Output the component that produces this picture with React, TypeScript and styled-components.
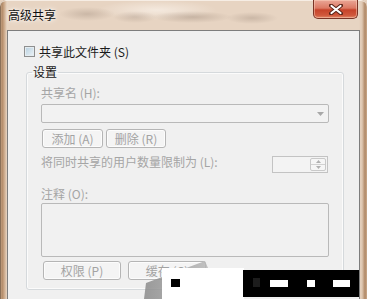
import React from "react";
import styled, { createGlobalStyle } from "styled-components";

const Global = createGlobalStyle`
  html, body { margin: 0; padding: 0; background: #e6d2bf; }
  body { font-family: "Noto Sans CJK SC", "Noto Sans", sans-serif; }
  * { box-sizing: border-box; }
`;

const Window = styled.div`
  position: relative;
  width: 367px;
  height: 299px;
  overflow: hidden;
  display: flex;
  flex-direction: column;
  padding: 0 7px;
  border-radius: 6px 6px 0 0;
  background:
    linear-gradient(90deg, #d9bfa5 0px, #b08866 2px, #c9a585 4px, #e8d6c5 7px, transparent 8px),
    linear-gradient(270deg, #c9a98b 0px, #b08866 2px, #dfc8b2 5px, transparent 8px),
    #e7d4c2;
  box-shadow: inset 0 1px 0 #f6ede4, inset 1px 0 0 #8b7058;
`;

const TitleBar = styled.div`
  height: 30px;
  flex: none;
  display: flex;
  align-items: flex-start;
  background:
    radial-gradient(ellipse 28px 7px at 80px 14px, rgba(150,130,115,0.35), transparent),
    radial-gradient(ellipse 22px 6px at 128px 17px, rgba(160,140,125,0.35), transparent),
    radial-gradient(ellipse 40px 6px at 185px 17px, rgba(150,130,115,0.4), transparent),
    radial-gradient(ellipse 26px 6px at 245px 18px, rgba(150,130,115,0.35), transparent),
    radial-gradient(ellipse 60px 10px at 150px 10px, rgba(255,250,245,0.55), transparent);
`;

const Title = styled.span`
  margin: 8px 0 0 1px;
  font-size: 12px;
  line-height: 14px;
  color: #111;
  text-shadow: 0 0 6px #fff, 0 0 3px #fff;
`;

const CloseButton = styled.div`
  margin-left: auto;
  margin-right: 2px;
  width: 45px;
  height: 19px;
  border: 1px solid #7a3426;
  border-top: none;
  border-radius: 0 0 5px 5px;
  background: linear-gradient(180deg, #eaa696 0%, #dc7a64 45%, #c6432a 55%, #d0583c 85%, #e08868 100%);
  box-shadow: inset 0 0 0 1px rgba(255,220,200,0.45);
  display: flex;
  align-items: center;
  justify-content: center;
`;

const Client = styled.div`
  flex: 1;
  background: #f0f0f0;
  border: 1px solid #7d7d7d;
  border-bottom: none;
  display: flex;
  flex-direction: column;
  padding-left: 16px;
`;

const CheckRow = styled.label`
  margin-top: 14px;
  height: 13px;
  display: flex;
  align-items: center;
  gap: 4px;
  font-size: 12px;
  color: #1a1a1a;
`;

const CheckBox = styled.span`
  width: 11px;
  height: 11px;
  border: 1px solid #8e8f8f;
  background: linear-gradient(135deg, #b6cfdf 0%, #d4e3ec 55%, #eef4f8 100%);
  box-shadow: inset 0 0 0 1px #e4ecf1;
`;

const Group = styled.fieldset`
  margin: 7px 0 0 2px;
  width: 318px;
  padding: 0 14px 9px 14px;
  border: 1px solid #d5d9dc;
  border-radius: 3px;
  box-shadow: inset 0 0 0 1px #fbfbfb;
  display: flex;
  flex-direction: column;
`;

const Legend = styled.legend`
  margin-left: -9px;
  padding: 0 1px;
  font-size: 12px;
  line-height: 14px;
  color: #1a1a1a;
`;

const Dim = styled.div<{ $top: number }>`
  margin-top: ${(p) => p.$top}px;
  font-size: 12px;
  line-height: 14px;
  color: #a5a5a5;
  white-space: nowrap;
`;

const Combo = styled.div`
  margin-top: 4px;
  width: 288px;
  height: 19px;
  border: 1px solid #b9b9b9;
  border-radius: 2px;
  background: #f2f2f2;
  display: flex;
  align-items: center;
  justify-content: flex-end;
  padding-right: 4px;
`;

const ButtonRow = styled.div<{ $top: number; $gap: number; $left: number }>`
  margin-top: ${(p) => p.$top}px;
  margin-left: ${(p) => p.$left}px;
  display: flex;
  gap: ${(p) => p.$gap}px;
`;

const Button = styled.div<{ $w: number }>`
  width: ${(p) => p.$w}px;
  height: 19px;
  border: 1px solid #b5b5b5;
  border-radius: 3px;
  background: #f4f4f4;
  box-shadow: inset 0 0 0 1px #fcfcfc;
  font-size: 12px;
  line-height: 17px;
  color: #a3a3a3;
  text-align: center;
  white-space: nowrap;
`;

const LimitRow = styled.div`
  margin-top: 8px;
  height: 17px;
  display: flex;
  align-items: flex-start;
`;

const Spinner = styled.div`
  margin-left: auto;
  margin-right: 1px;
  width: 56px;
  height: 17px;
  border: 1px solid #c3c3c3;
  background: #f3f3f3;
  display: flex;
  justify-content: flex-end;
  padding: 1px;
`;

const SpinButtons = styled.div`
  width: 16px;
  display: flex;
  flex-direction: column;
  border: 1px solid #c9c9c9;
  border-radius: 2px;
  background: #f6f6f6;
`;

const SpinHalf = styled.div`
  flex: 1;
  display: flex;
  align-items: center;
  justify-content: center;
  & + & { border-top: 1px solid #d2d2d2; }
`;

const TextArea = styled.div`
  margin-top: 2px;
  width: 288px;
  height: 54px;
  border: 1px solid #b9b9b9;
  border-radius: 2px;
  background: #f1f1f1;
`;

const Overlay = styled.svg`
  position: absolute;
  left: 0;
  top: 0;
  pointer-events: none;
`;

export default function App() {
  return (
    <>
      <Global />
      <Window>
        <TitleBar>
          <Title>高级共享</Title>
          <CloseButton>
            <svg width="14" height="11" viewBox="0 0 14 11">
              <path d="M2 1.5 L12 9.5 M12 1.5 L2 9.5" stroke="#5a2418" strokeWidth="4" strokeLinecap="round" />
              <path d="M2.5 2 L11.5 9 M11.5 2 L2.5 9" stroke="#ffffff" strokeWidth="2.2" strokeLinecap="round" />
            </svg>
          </CloseButton>
        </TitleBar>
        <Client>
          <CheckRow>
            <CheckBox />
            共享此文件夹 (S)
          </CheckRow>
          <Group>
            <Legend>设置</Legend>
            <Dim $top={7}>共享名 (H):</Dim>
            <Combo>
              <svg width="7" height="4" viewBox="0 0 7 4">
                <path d="M0 0 L7 0 L3.5 4 Z" fill="#a8a8a8" />
              </svg>
            </Combo>
            <ButtonRow $top={6} $gap={3} $left={1}>
              <Button $w={61}>添加 (A)</Button>
              <Button $w={60}>删除 (R)</Button>
            </ButtonRow>
            <LimitRow>
              <Dim $top={-1}>将同时共享的用户数量限制为 (L):</Dim>
              <Spinner>
                <SpinButtons>
                  <SpinHalf>
                    <svg width="5" height="3" viewBox="0 0 5 3">
                      <path d="M0 3 L5 3 L2.5 0 Z" fill="#b0b0b0" />
                    </svg>
                  </SpinHalf>
                  <SpinHalf>
                    <svg width="5" height="3" viewBox="0 0 5 3">
                      <path d="M0 0 L5 0 L2.5 3 Z" fill="#b0b0b0" />
                    </svg>
                  </SpinHalf>
                </SpinButtons>
              </Spinner>
            </LimitRow>
            <Dim $top={14}>注释 (O):</Dim>
            <TextArea />
            <ButtonRow $top={4} $gap={7} $left={2}>
              <Button $w={78}>权限 (P)</Button>
              <Button $w={78}>缓存 (C)</Button>
            </ButtonRow>
          </Group>
        </Client>
        <Overlay width="367" height="299" viewBox="0 0 367 299">
          <defs>
            <linearGradient id="wmg" x1="0" y1="0" x2="1" y2="0">
              <stop offset="0" stopColor="#8a8a8a" />
              <stop offset="1" stopColor="#b8b8b8" />
            </linearGradient>
          </defs>
          <polygon points="146,283 205,261 208,268 162,268 162,299 144,299" fill="url(#wmg)" opacity="0.85" />
          <rect x="162" y="268" width="82" height="31" fill="#ffffff" />
          <rect x="171" y="279" width="9" height="8" fill="#000000" />
          <rect x="243" y="270" width="116" height="27" fill="#000000" />
          <rect x="253" y="278" width="7" height="9" fill="#1c1c1c" />
          <rect x="270" y="280" width="18" height="7" fill="#ffffff" />
          <rect x="307" y="280" width="8" height="7" fill="#ffffff" />
          <rect x="333" y="280" width="17" height="7" fill="#ffffff" />
        </Overlay>
      </Window>
    </>
  );
}
